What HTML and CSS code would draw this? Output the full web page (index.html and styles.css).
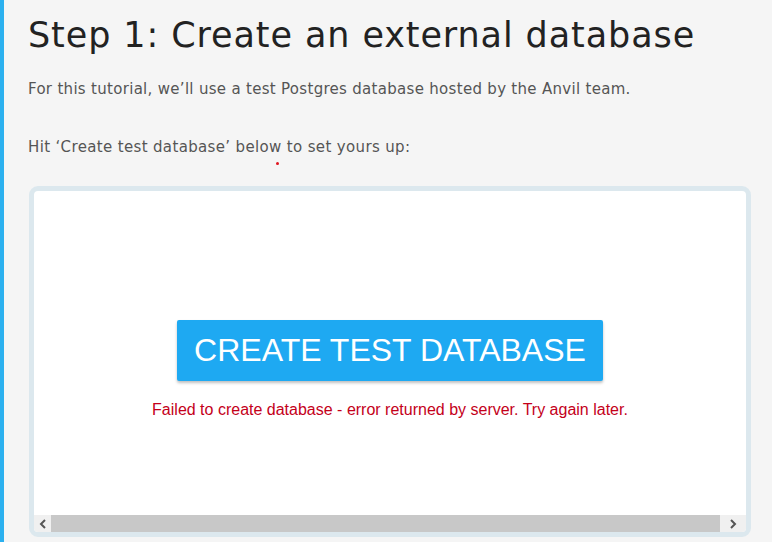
FILE: index.html
```html
<!DOCTYPE html>
<html lang="en">
<head>
    <meta charset="UTF-8">
    <meta name="viewport" content="width=device-width, initial-scale=1.0">
    <title>Step 1: Create an external database</title>
    <link rel="stylesheet" href="styles.css">
</head>
<body>

    <div class="page">
        <h1>Step 1: Create an external database</h1>

        <p class="intro">For this tutorial, we’ll use a test Postgres database hosted by the Anvil team.</p>

        <p class="intro hint">Hit ‘Create test database’ below to set yours up:<span class="dot"></span></p>

        <div class="frame">
            <div class="frame-body">
                <button class="create-btn">CREATE TEST DATABASE</button>
                <div class="error">Failed to create database - error returned by server. Try again later.</div>
            </div>
            <div class="scrollbar">
                <span class="arrow">
                    <svg width="8" height="10" viewBox="0 0 8 10"><path d="M6 1 L2 5 L6 9" fill="none" stroke="#555" stroke-width="2"/></svg>
                </span>
                <span class="thumb"></span>
                <span class="arrow right">
                    <svg width="8" height="10" viewBox="0 0 8 10"><path d="M2 1 L6 5 L2 9" fill="none" stroke="#555" stroke-width="2"/></svg>
                </span>
            </div>
        </div>
    </div>

</body>
</html>
```

FILE: styles.css
```css
body {
    margin: 0;
    background: #f5f5f5;
    font-family: "DejaVu Sans", sans-serif;
    color: #212121;
}
.page {
    border-left: 4px solid #2bb0ef;
    min-height: 542px;
    box-sizing: border-box;
    padding: 13px 23px 0 24px;
}
h1 {
    margin: 0;
    font-weight: 400;
    font-size: 35px;
    line-height: 44px;
    letter-spacing: 0.9px;
    color: #222;
}
.intro {
    margin: 21px 0 0 0;
    font-size: 15px;
    line-height: 22px;
    letter-spacing: 0.3px;
    color: #555;
}
.hint {
    margin-top: 36px;
    letter-spacing: 0.35px;
    position: relative;
}
.dot {
    position: absolute;
    left: 248px;
    top: 26px;
    width: 3px;
    height: 3px;
    border-radius: 50%;
    background: #e0141e;
}
.frame {
    margin-top: 28px;
    margin-left: 1px;
    border: 5px solid #dce8ee;
    border-radius: 9px;
    background: #fff;
    width: 712px;
    overflow: hidden;
}
.frame-body {
    height: 324px;
    display: flex;
    flex-direction: column;
    align-items: center;
    justify-content: flex-start;
    padding-top: 129px;
    box-sizing: border-box;
}
.create-btn {
    background: #1ea9f2;
    color: #fff;
    border: none;
    border-radius: 2px;
    font-family: "Liberation Sans", Arial, sans-serif;
    font-size: 32px;
    height: 61px;
    padding: 0 17px;
    box-shadow: 0 2px 3px rgba(0,0,0,0.25);
}
.error {
    margin-top: 20px;
    font-family: "Liberation Sans", Arial, sans-serif;
    font-size: 16px;
    color: #c4001a;
}
.scrollbar {
    display: flex;
    height: 17px;
    background: #f0f0f0;
}
.arrow {
    width: 17px;
    display: flex;
    align-items: center;
    justify-content: center;
}
.arrow.right {
    width: 26px;
}
.thumb {
    flex: 1;
    background: #c8c8c8;
}
```
